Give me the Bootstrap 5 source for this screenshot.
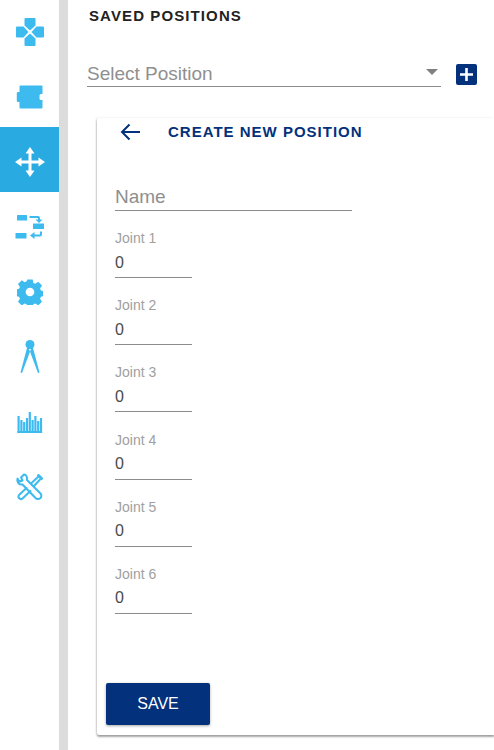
<!DOCTYPE html>
<html lang="en">
<head>
  <meta charset="UTF-8">
  <title>Saved Positions</title>
  <link href="https://cdn.jsdelivr.net/npm/bootstrap@5.3.3/dist/css/bootstrap.min.css" rel="stylesheet">
  <style>
    html, body {
      height: 750px;
      overflow: hidden;
    }

    body {
      background-color: #fff;
      font-family: "Liberation Sans", Arial, sans-serif;
      color: #222;
    }

    .side-rail {
      width: 59px;
      height: 750px;
      overflow: hidden;
      flex: none;
    }

    .side-list {
      margin-top: -3px;
    }

    .side-item {
      height: 65px;
      padding-top: 4px;
      color: #3dbbef;
    }

    .side-item.is-active {
      background-color: #29abe2;
      color: #fff;
    }

    .side-gap {
      width: 9px;
      height: 750px;
      background-color: #dcdcdc;
      flex: none;
    }

    .main-pane {
      flex: 1;
      min-width: 0;
    }

    .saved-title {
      margin: 9px 0 0 21px;
      font-size: 15px;
      line-height: 14px;
      font-weight: 700;
      letter-spacing: 1.1px;
      color: #222;
    }

    .select-row {
      margin: 37px 0 0 19px;
    }

    .select-wrap {
      width: 354px;
    }

    .pos-select {
      height: 27px;
      padding: 2px 0 0;
      border: 0;
      border-bottom: 1px solid #8c8c8c;
      border-radius: 0;
      background: none;
      font-size: 19px;
      line-height: 24px;
      color: #8f8f8f;
      appearance: none;
    }

    .select-caret {
      position: absolute;
      right: 3px;
      top: 9px;
      border-left: 6px solid transparent;
      border-right: 6px solid transparent;
      border-top: 6px solid #808080;
    }

    .add-btn {
      width: 21px;
      height: 21px;
      margin: 4px 0 0 15px;
      padding: 0;
      border: 0;
      border-radius: 2px;
      background-color: #03317c;
    }

    .new-card {
      margin: 31px 0 0 29px;
      height: 617px;
      padding: 0 0 0 18px;
      border: 0;
      border-radius: 2px 0 0 2px;
      background-color: #fff;
      box-shadow: 0 2px 2px rgba(0, 0, 0, .35), -1px 0 2px rgba(0, 0, 0, .12);
    }

    .new-head {
      height: 28px;
    }

    .back-btn {
      width: 24px;
      margin-left: 5px;
      padding: 0;
      border: 0;
      background: none;
      line-height: 0;
      text-align: left;
    }

    .new-title {
      margin: 0 0 0 24px;
      font-size: 15px;
      font-weight: 700;
      letter-spacing: 1px;
      color: #03317c;
    }

    .line-input {
      padding: 0;
      border: 0;
      border-bottom: 1px solid #8c8c8c;
      border-radius: 0;
      background: none;
      color: #4a4a4a;
    }

    .line-input:focus {
      box-shadow: none;
      border-color: #03317c;
    }

    .name-input {
      width: 237px;
      height: 27px;
      margin-top: 38px;
      font-size: 19px;
    }

    .name-input::placeholder {
      color: #8f8f8f;
    }

    .joint-list {
      margin-top: 17px;
    }

    .joint-field {
      height: 67.2px;
    }

    .joint-label {
      display: block;
      margin: 0;
      height: 20px;
      font-size: 14px;
      line-height: 21px;
      color: #a0a0a0;
    }

    .joint-input {
      width: 77px;
      height: 30px;
      font-size: 16px;
    }

    .save-btn {
      position: absolute;
      left: 9px;
      bottom: 10px;
      width: 104px;
      height: 42px;
      padding: 0;
      border: 0;
      border-radius: 2px;
      background-color: #03317c;
      color: #fff;
      font-size: 16px;
      box-shadow: 0 1px 3px rgba(0, 0, 0, .35);
    }
  </style>
</head>
<body>

  <div class="d-flex">
    <nav class="side-rail">
      <div class="side-list">
        <div class="side-item d-flex align-items-center justify-content-center">
          <svg width="30" height="30" viewBox="0 0 30 30" fill="currentColor">
            <path d="M10.500 1h9a1 1 0 0 1 1 1v6.500L15 13.500 9.500 8.500V2a1 1 0 0 1 1-1z"/>
            <path d="M10.500 29h9a1 1 0 0 0 1-1v-6.500L15 16.500l-5.500 5V28a1 1 0 0 0 1 1z"/>
            <path d="M1 10.500v9a1 1 0 0 0 1 1h6.500l5-5.500-5-5.500H2a1 1 0 0 0-1 1z"/>
            <path d="M29 10.500v9a1 1 0 0 1-1 1h-6.500l-5-5.500 5-5.500H28a1 1 0 0 1 1 1z"/>
          </svg>
        </div>
        <div class="side-item d-flex align-items-center justify-content-center">
          <svg width="30" height="30" viewBox="0 0 30 30" fill="currentColor">
            <path d="M5.500 3.500h21a1 1 0 0 1 1 1V12h-1.500a1.500 1.500 0 0 0-1.500 1.500v3a1.500 1.500 0 0 0 1.500 1.500h1.500v7.500a1 1 0 0 1-1 1h-21a1 1 0 0 1-1-1V20H3a1.200 1.200 0 0 1-1.200-1.200v-7.600A1.200 1.200 0 0 1 3 10h1.500V4.500a1 1 0 0 1 1-1z"/>
          </svg>
        </div>
        <div class="side-item is-active d-flex align-items-center justify-content-center">
          <svg width="30" height="30" viewBox="0 0 30 30" fill="currentColor">
            <path d="M15 0l4.500 6.500h-3V13.500h7V10.500L30 15l-6.500 4.500v-3h-7v7h3L15 30l-4.500-6.500h3v-7h-7v3L0 15l6.500-4.500v3h7v-7h-3z"/>
          </svg>
        </div>
        <div class="side-item d-flex align-items-center justify-content-center">
          <svg width="30" height="30" viewBox="0 0 30 30" fill="currentColor">
            <rect x="2" y="3" width="10" height="5.500" rx=".5"/>
            <rect x="18" y="11.500" width="11" height="5.500" rx=".5"/>
            <rect x="0.500" y="21" width="11" height="5.500" rx=".5"/>
            <path d="M14 5h8.500a2 2 0 0 1 2 2v1.500H27l-3.500 3.500L20 8.500h2.500V7H14z" transform="translate(.5 -1)"/>
            <path d="M27 19.500v3a2 2 0 0 1-2 2h-5.500V27L15 23.500 19.500 20v2.500H25v-3z"/>
          </svg>
        </div>
        <div class="side-item d-flex align-items-center justify-content-center">
          <svg width="26" height="26" viewBox="0 0 24 24" fill="currentColor">
            <path fill-rule="evenodd" d="M9.500 .5h5l.6 3.100 1.800.8 2.700-1.800 3.500 3.500-1.800 2.700.8 1.800 3.100.6v4.600l-3.100.6-.8 1.800 1.800 2.700-3.500 3.500-2.700-1.800-1.800.8-.6 3.100h-5l-.6-3.100-1.800-.8-2.700 1.800-3.500-3.500 1.800-2.700-.8-1.800-3.100-.6V9.700l3.100-.6.8-1.800-1.800-2.700 3.500-3.500 2.700 1.800 1.800-.8zM12 8a4 4 0 1 0 0 8 4 4 0 0 0 0-8z"/>
          </svg>
        </div>
        <div class="side-item d-flex align-items-center justify-content-center">
          <svg width="30" height="36" viewBox="0 0 30 36" fill="currentColor">
            <circle cx="15" cy="5.500" r="4.500"/>
            <path d="M12.500 7L5.500 33.500l1.500 .5L16 10zM17.500 7l7 26.500-1.500 .5L14 10z"/>
          </svg>
        </div>
        <div class="side-item d-flex align-items-center justify-content-center">
          <svg width="30" height="30" viewBox="0 0 30 30" fill="currentColor">
            <rect x="2.500" y="9" width="2.200" height="17"/>
            <rect x="5.300" y="13" width="2.200" height="13"/>
            <rect x="8.100" y="15" width="2.200" height="11"/>
            <rect x="10.900" y="11" width="2.200" height="15"/>
            <rect x="13.700" y="5" width="2.200" height="21"/>
            <rect x="16.500" y="13" width="2.200" height="13"/>
            <rect x="19.300" y="9" width="2.200" height="17"/>
            <rect x="22.100" y="14" width="2.200" height="12"/>
            <rect x="24.900" y="11" width="2.200" height="15"/>
            <rect x="2.500" y="24" width="24.600" height="2"/>
          </svg>
        </div>
        <div class="side-item d-flex align-items-center justify-content-center">
          <svg width="30" height="30" viewBox="0 0 30 30" fill="none" stroke="currentColor" stroke-width="2" stroke-linejoin="round" stroke-linecap="round">
            <path d="M9 2.500L6 5.500l1.500 3-3 1L2.500 6.500C1.500 10 4 13 7.500 12.500L20.500 26a3 3 0 0 0 5-4.500L12 8c.5-3.500-1.500-6-3-5.500z"/>
            <path d="M11.500 16L4 23a2.500 2.500 0 0 0 3.500 3.500L15.500 19"/>
            <path d="M16.500 11L23 5M19 14l6-6.500"/>
            <path d="M23.500 3.500l3 3" stroke-width="3"/>
          </svg>
        </div>
      </div>
    </nav>
    <div class="side-gap"></div>

    <main class="main-pane">
      <h1 class="saved-title">SAVED POSITIONS</h1>

      <div class="select-row d-flex">
        <div class="select-wrap position-relative">
          <select class="pos-select form-select">
            <option>Select Position</option>
          </select>
          <span class="select-caret"></span>
        </div>
        <button class="add-btn d-flex align-items-center justify-content-center" type="button" aria-label="Add">
          <svg width="13" height="13" viewBox="0 0 13 13" fill="#fff"><path d="M5.200 0h2.600v5.200H13v2.600H7.800V13H5.200V7.800H0V5.200h5.200z"/></svg>
        </button>
      </div>

      <div class="new-card position-relative">
        <div class="new-head d-flex align-items-center">
          <button class="back-btn" type="button" aria-label="Back">
            <svg width="20" height="18" viewBox="0 0 20 18" fill="none" stroke="#03317c" stroke-width="2"><path d="M20 9H2M9.500 1.500L2 9l7.500 7.500"/></svg>
          </button>
          <h2 class="new-title">CREATE NEW POSITION</h2>
        </div>

        <input class="line-input name-input form-control" type="text" placeholder="Name">

        <div id="joints" class="joint-list"></div>

        <button class="save-btn btn" type="button">SAVE</button>
      </div>
    </main>
  </div>

  <script src="https://cdn.jsdelivr.net/npm/bootstrap@5.3.3/dist/js/bootstrap.bundle.min.js"></script>
  <script>
    const joints = [1, 2, 3, 4, 5, 6];

    document.getElementById('joints').innerHTML = joints.map(n => `
      <div class="joint-field">
        <label class="joint-label" for="joint${n}">Joint ${n}</label>
        <input id="joint${n}" class="line-input joint-input form-control" type="text" value="0">
      </div>
    `).join('');
  </script>
</body>
</html>
